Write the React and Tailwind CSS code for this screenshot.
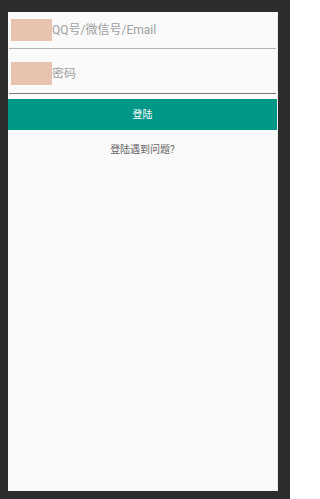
export default function App() {
  return (
    <div
      className="h-[499px] w-[290px] bg-[#2d2d2d] pl-2 pr-3 pt-3 pb-2"
      style={{ fontFamily: 'Roboto, "Noto Sans CJK SC", sans-serif' }}
    >
      <div className="flex h-full flex-col border-r border-[#ececec] bg-[#fafafa]">
        {/* account */}
        <div className="mx-[1px] flex h-[37px] items-center border-b border-[#b4b4b4] pl-[2px]">
          <span className="h-[22px] w-[41px] shrink-0 bg-[#e8c3b0]" />
          <span className="text-[12px] leading-none text-[#a0a0a0]">QQ号/微信号/Email</span>
        </div>

        {/* password */}
        <div className="mx-[1px] flex h-[45px] items-center border-b border-[#7a7a7a] pl-[2px] pt-[5px]">
          <span className="h-[23px] w-[41px] shrink-0 bg-[#e8c3b0]" />
          <span className="text-[12px] leading-none text-[#a0a0a0]">密码</span>
        </div>

        <button className="mt-[5px] flex h-[31px] w-full items-center justify-center bg-[#009688] text-[10px] text-white">
          登陆
        </button>

        <div className="mt-[14px] text-center text-[10px] leading-[12px] text-[#666]">登陆遇到问题?</div>
      </div>
    </div>
  )
}
